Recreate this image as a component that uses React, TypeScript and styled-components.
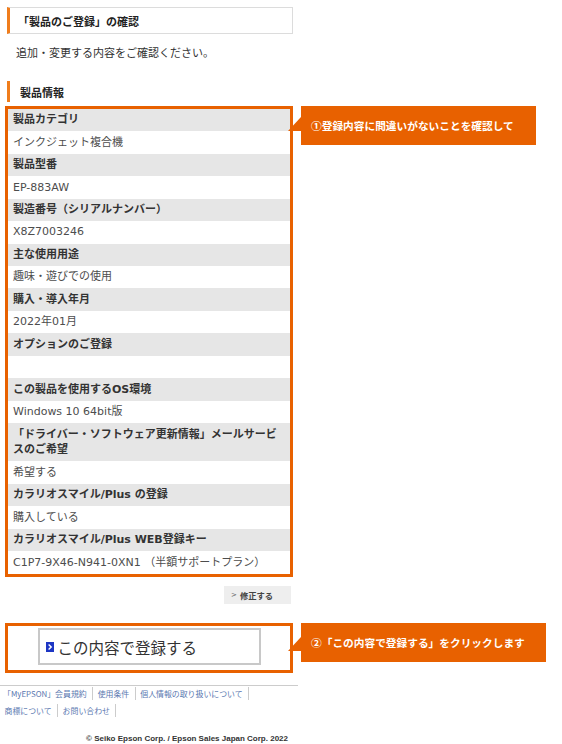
import styled, { createGlobalStyle } from "styled-components";

const orange = "#e86100";

const GlobalStyle = createGlobalStyle`
  body {
    margin: 0;
    background: #fff;
    color: #333;
    font-family: "DejaVu Sans", "Noto Sans CJK JP", sans-serif;
  }
  * {
    box-sizing: border-box;
  }
`;

type Row = { label: string; value: string };

const rows: Row[] = [
  { label: "製品カテゴリ", value: "インクジェット複合機" },
  { label: "製品型番", value: "EP-883AW" },
  { label: "製造番号（シリアルナンバー）", value: "X8Z7003246" },
  { label: "主な使用用途", value: "趣味・遊びでの使用" },
  { label: "購入・導入年月", value: "2022年01月" },
  { label: "オプションのご登録", value: "" },
  { label: "この製品を使用するOS環境", value: "Windows 10 64bit版" },
  { label: "「ドライバー・ソフトウェア更新情報」メールサービスのご希望", value: "希望する" },
  { label: "カラリオスマイル/Plus の登録", value: "購入している" },
  { label: "カラリオスマイル/Plus WEB登録キー", value: "C1P7-9X46-N941-0XN1 （半額サポートプラン）" },
];

const footerLinks = [
  "「MyEPSON」会員規約",
  "使用条件",
  "個人情報の取り扱いについて",
  "商標について",
  "お問い合わせ",
];

const App = () => {
  return (
    <>
      <GlobalStyle />
      <Page>
        <TitleBox>「製品のご登録」の確認</TitleBox>
        <Lead>追加・変更する内容をご確認ください。</Lead>

        <SectionHeading>製品情報</SectionHeading>
        <Annotated>
          <InfoBox>
            {rows.map((row) => (
              <div key={row.label}>
                <Cell $head>{row.label}</Cell>
                <Cell>{row.value || "\u00a0"}</Cell>
              </div>
            ))}
          </InfoBox>
          <Callout $width={235} $tailTop={11}>
            ①登録内容に間違いがないことを確認して
          </Callout>
        </Annotated>

        <FixRow>
          <FixButton>
            <Chevron>&gt;</Chevron>修正する
          </FixButton>
        </FixRow>

        <Annotated $gap={18.5}>
          <SubmitBox>
            <SubmitButton>
              <ArrowIcon viewBox="0 0 8 10">
                <rect width="8" height="10" fill="#1d36c4" />
                <path d="M2.6 2.6 L5.2 5 L2.6 7.4" stroke="#fff" strokeWidth="1.4" fill="none" />
              </ArrowIcon>
              この内容で登録する
            </SubmitButton>
          </SubmitBox>
          <Callout $width={245} $tailTop={14}>
            ②「この内容で登録する」をクリックします
          </Callout>
        </Annotated>

        <Footer>
          <FooterLinks>
            {footerLinks.map((link) => (
              <FooterLink key={link}>{link}</FooterLink>
            ))}
          </FooterLinks>
          <Copyright>© Seiko Epson Corp. / Epson Sales Japan Corp. 2022</Copyright>
        </Footer>
      </Page>
    </>
  );
};

export default App;

const Page = styled.div`
  width: 300px;
  padding-top: 7px;
  font-size: 11px;
`;

const TitleBox = styled.div`
  display: flex;
  align-items: center;
  margin-left: 7px;
  width: 286px;
  height: 27px;
  padding-left: 8px;
  border: 1px solid #dcdcdc;
  border-left: 3px solid #f07d1c;
  font-family: "Noto Sans CJK JP", sans-serif;
  font-size: 11px;
  font-weight: 700;
  color: #222;
`;

const Lead = styled.p`
  margin: 10px 0 0;
  padding-left: 16px;
  line-height: 16px;
  font-family: "Noto Sans CJK JP", sans-serif;
  font-size: 11px;
  color: #333;
`;

const SectionHeading = styled.h2`
  display: flex;
  align-items: center;
  margin: 21px 0 0 7px;
  height: 21px;
  padding-left: 10px;
  border-left: 3px solid #f07d1c;
  font-family: "Noto Sans CJK JP", sans-serif;
  font-size: 11px;
  font-weight: 700;
  color: #222;
`;

const Annotated = styled.div<{ $gap?: number }>`
  position: relative;
  margin: ${(p) => p.$gap ?? 3.7}px 0 0 5px;
  width: 288px;
`;

const InfoBox = styled.div`
  border: 3px solid ${orange};
  background: #fff;
`;

const Cell = styled.div<{ $head?: boolean }>`
  padding: 3.45px 5px;
  line-height: 15.6px;
  font-size: 11px;
  background: ${(p) => (p.$head ? "#e6e6e6" : "#fff")};
  color: ${(p) => (p.$head ? "#333" : "#4d4d4d")};
  font-weight: ${(p) => (p.$head ? 700 : 400)};
`;

const Callout = styled.div<{ $width: number; $tailTop: number }>`
  position: absolute;
  top: 0;
  left: calc(100% + 8px);
  width: ${(p) => p.$width}px;
  height: 39px;
  display: flex;
  align-items: center;
  padding-left: 10px;
  background: ${orange};
  color: #fff;
  font-family: "Noto Sans CJK JP", sans-serif;
  font-size: 10.7px;
  font-weight: 700;
  white-space: nowrap;

  &::before {
    content: "";
    position: absolute;
    left: -13px;
    top: ${(p) => p.$tailTop}px;
    width: 0;
    height: 0;
    border-top: 14px solid transparent;
    border-right: 13px solid ${orange};
  }
`;

const FixRow = styled.div`
  display: flex;
  justify-content: flex-end;
  width: 291px;
  margin-top: 9.5px;
`;

const FixButton = styled.div`
  display: flex;
  align-items: center;
  gap: 3px;
  width: 67px;
  height: 18px;
  padding-left: 7px;
  background: #eeeeee;
  font-family: "Noto Sans CJK JP", sans-serif;
  font-size: 8.3px;
  font-weight: 700;
  color: #444;
`;

const Chevron = styled.span`
  font-family: "DejaVu Sans", sans-serif;
  font-size: 7px;
  font-weight: 400;
  color: #666;
`;

const SubmitBox = styled.div`
  display: flex;
  justify-content: center;
  padding: 2.5px 0 4.5px;
  border: 3px solid ${orange};
  background: #fff;
`;

const SubmitButton = styled.div`
  display: flex;
  align-items: center;
  gap: 3.5px;
  width: 223px;
  height: 37px;
  padding-left: 6.5px;
  border: 2px solid #c8c8c8;
  background: #fff;
  font-family: "Noto Sans CJK JP", sans-serif;
  font-size: 15.5px;
  color: #333;
`;

const ArrowIcon = styled.svg`
  width: 8px;
  height: 10px;
  flex-shrink: 0;
  margin-top: 1px;
`;

const Footer = styled.footer`
  width: 298px;
  margin-top: 12px;
  border-top: 1px solid #cccccc;
`;

const FooterLinks = styled.div`
  display: flex;
  flex-wrap: wrap;
  row-gap: 4px;
  width: 284px;
  padding-top: 1.5px;
`;

const FooterLink = styled.span`
  padding: 0 5.5px 0 4.5px;
  border-right: 1px solid #cccccc;
  line-height: 13px;
  font-family: "Noto Sans CJK JP", sans-serif;
  font-size: 7.9px;
  color: #5a78b0;

  &:first-child {
    padding-left: 3px;
  }
`;

const Copyright = styled.div`
  width: 288px;
  margin-top: 17px;
  text-align: right;
  font-family: "Liberation Sans", sans-serif;
  font-size: 8px;
  font-weight: 700;
  color: #333;
`;
